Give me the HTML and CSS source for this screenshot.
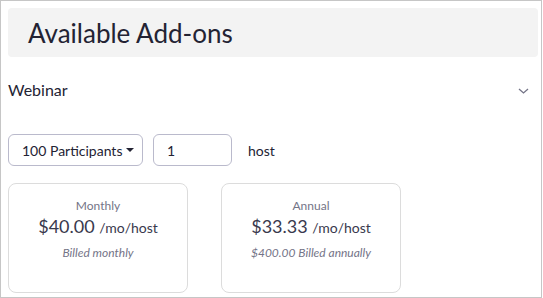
FILE: index.html
```html
<!DOCTYPE html>
<html lang="en">
<head>
  <meta charset="UTF-8" />
  <meta name="viewport" content="width=device-width, initial-scale=1.0" />
  <title>Available Add-ons</title>
  <link rel="stylesheet" href="styles.css">
</head>
<body>
  <div class="panel">
    <header class="title-bar">
      <h1>Available Add-ons</h1>
    </header>

    <div class="section-row">
      <span class="section-name">Webinar</span>
      <svg class="chevron" width="11" height="6" viewBox="0 0 11 6">
        <path d="M1 1 L5.5 5 L10 1" fill="none" stroke="#747487" stroke-width="1.3" />
      </svg>
    </div>

    <div class="controls">
      <button class="dropdown">100 Participants<span class="caret"></span></button>
      <input type="text" class="qty" value="1">
      <span class="unit">host</span>
    </div>

    <div class="plans">
      <div class="plan">
        <div class="plan-name">Monthly</div>
        <div class="plan-price">$40.00 <span class="per">/mo/host</span></div>
        <div class="plan-note">Billed monthly</div>
      </div>
      <div class="plan">
        <div class="plan-name">Annual</div>
        <div class="plan-price">$33.33 <span class="per">/mo/host</span></div>
        <div class="plan-note">$400.00 Billed annually</div>
      </div>
    </div>
  </div>
</body>
</html>
```

FILE: styles.css
```css
body {
  font-family: Lato, "Open Sans", sans-serif;
  background-color: #ffffff;
  color: #232333;
  margin: 0;
  padding: 0;
}
.panel {
  box-sizing: border-box;
  width: 542px;
  height: 298px;
  border: 1px solid #c6c6c6;
  padding: 7px 3px 0 7px;
  overflow: hidden;
}
.title-bar {
  box-sizing: border-box;
  width: 530px;
  height: 49px;
  background-color: #f3f3f3;
  border-radius: 4px;
  padding-left: 20px;
  display: flex;
  align-items: center;
}
.title-bar h1 {
  margin: 0;
  font-size: 26px;
  font-weight: 400;
  color: #232333;
}
.section-row {
  width: 530px;
  height: 40px;
  margin-top: 12px;
  display: flex;
  justify-content: space-between;
  align-items: center;
}
.section-name {
  font-size: 16px;
}
.chevron {
  margin-right: 9px;
  margin-top: 4px;
}
.controls {
  margin-top: 25px;
  display: flex;
  align-items: center;
}
.dropdown {
  box-sizing: border-box;
  width: 135px;
  height: 32px;
  padding: 0 0 0 13px;
  border: 1px solid #babacc;
  border-radius: 6px;
  background-color: #ffffff;
  font-family: inherit;
  font-size: 14px;
  color: #232333;
  text-align: left;
  display: flex;
  align-items: center;
}
.caret {
  margin-left: 4px;
  width: 0;
  height: 0;
  border-left: 4px solid transparent;
  border-right: 4px solid transparent;
  border-top: 4px solid #232333;
}
.qty {
  box-sizing: border-box;
  width: 79px;
  height: 32px;
  margin-left: 10px;
  padding: 0 13px;
  border: 1px solid #babacc;
  border-radius: 6px;
  font-family: inherit;
  font-size: 14px;
  color: #232333;
}
.unit {
  margin-left: 16px;
  font-size: 14px;
}
.plans {
  margin-top: 17px;
  display: flex;
  gap: 33px;
}
.plan {
  box-sizing: border-box;
  width: 180px;
  height: 110px;
  border: 1px solid #dcdcdc;
  border-radius: 8px;
  padding-top: 14px;
  text-align: center;
}
.plan-name {
  font-size: 12px;
  color: #747487;
}
.plan-price {
  margin-top: 2px;
  font-size: 18px;
  color: #39394d;
}
.per {
  font-size: 14px;
}
.plan-note {
  margin-top: 8px;
  font-size: 12px;
  font-style: italic;
  color: #747487;
}
```
